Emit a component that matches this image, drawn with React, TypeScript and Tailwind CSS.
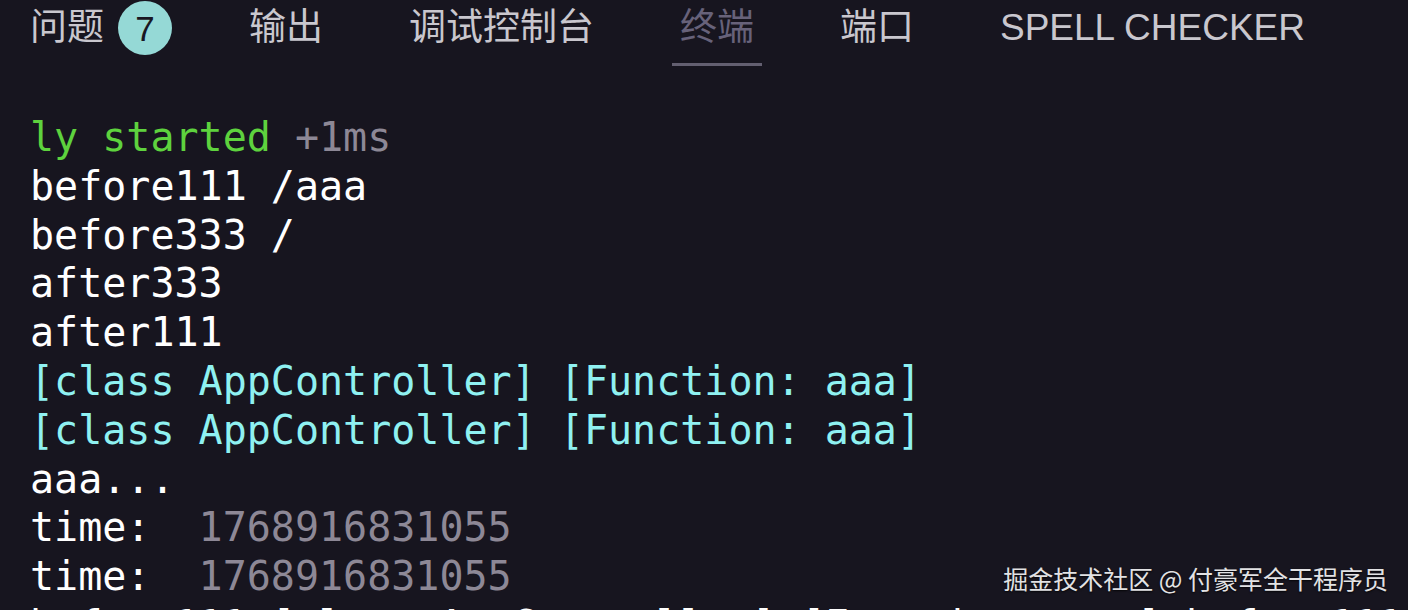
import { ReactNode } from 'react';

const tabs = [
  { label: '问题', badge: '7' },
  { label: '输出' },
  { label: '调试控制台' },
  { label: '终端', active: true },
  { label: '端口' },
  { label: 'SPELL CHECKER' },
];

type Seg = { text: string; color?: string };

// terminal output, one array per line
const lines: Seg[][] = [
  [{ text: 'ly started', color: 'text-[#5ed23e]' }, { text: ' +1ms', color: 'text-[#8d8896]' }],
  [{ text: 'before111 /aaa' }],
  [{ text: 'before333 /' }],
  [{ text: 'after333' }],
  [{ text: 'after111' }],
  [{ text: '[class AppController] [Function: aaa]', color: 'text-[#8ff1f1]' }],
  [{ text: '[class AppController] [Function: aaa]', color: 'text-[#8ff1f1]' }],
  [{ text: 'aaa...' }],
  [{ text: 'time:  ' }, { text: '1768916831055', color: 'text-[#8d8896]' }],
  [{ text: 'time:  ' }, { text: '1768916831055', color: 'text-[#8d8896]' }],
  [{ text: 'before111 [class AppController] [Function: aaa] before111 /aaa' }],
];

const Line = ({ children }: { children: ReactNode }) => (
  <div className="h-[48.8px] leading-[48.8px] whitespace-pre">{children}</div>
);

const App = () => {
  return (
    <div className="relative w-[1408px] h-[610px] overflow-hidden bg-[#17151f]">
      {/* Panel tabs */}
      <div className="flex items-start gap-[70px] pl-[22px] h-[66px] font-['Liberation_Sans','Noto_Sans_CJK_SC',sans-serif]">
        {tabs.map((tab) => (
          <div
            key={tab.label}
            className={
              'flex items-center gap-[14px] px-2 h-[66px] pb-[7px] border-b-[3px] ' +
              (tab.active ? 'border-[#635f70] text-[#67627a]' : 'border-transparent text-[#c9c7ce]')
            }
          >
            <span className="text-[37px] leading-[56px]">{tab.label}</span>
            {tab.badge && (
              <span className="flex items-center justify-center w-[54px] h-[54px] -mr-[9px] rounded-full bg-[#95d9d6] text-[#191722] text-[35px] leading-none">
                {tab.badge}
              </span>
            )}
          </div>
        ))}
      </div>

      {/* Terminal output */}
      <div className="pt-[47px] pl-[30px] text-white text-[40px] font-['DejaVu_Sans_Mono',monospace]">
        {lines.map((segs, i) => (
          <Line key={i}>
            {segs.map((s, j) => (
              <span key={j} className={s.color}>
                {s.text}
              </span>
            ))}
          </Line>
        ))}
      </div>

      {/* Watermark */}
      <div className="absolute right-[20px] top-[560px] text-[25px] leading-[36px] text-[#e2e2e4] font-['Noto_Sans_CJK_SC',sans-serif] [text-shadow:0_1px_2px_rgba(0,0,0,0.8)]">
        掘金技术社区 @ 付豪军全干程序员
      </div>
    </div>
  );
};

export default App;
